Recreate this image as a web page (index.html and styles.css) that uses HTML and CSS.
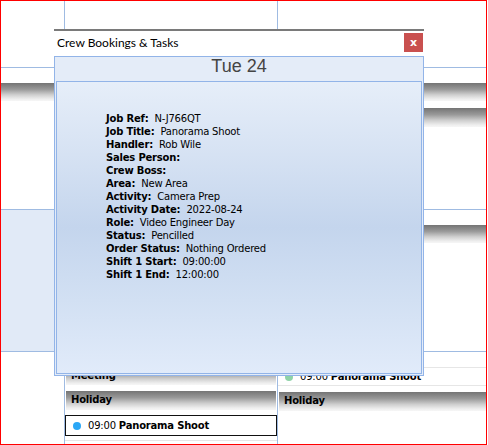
FILE: index.html
```html
<!DOCTYPE html>
<html lang="en">
<head>
    <meta charset="UTF-8">
    <title>Crew Bookings & Tasks</title>
    <link rel="stylesheet" href="styles.css">
</head>
<body>
    <div class="frame">
        <div class="calendar">
            <div class="cell c0 r1"></div>
            <div class="cell c1 r1"></div>
            <div class="cell c2 r1"></div>

            <div class="cell c0 r2"><div class="bar"></div></div>
            <div class="cell c1 r2"><div class="bar"></div></div>
            <div class="cell c2 r2"><div class="bar"></div><div class="bar second"></div></div>

            <div class="cell c0 r3 shaded"></div>
            <div class="cell c1 r3"><div class="bar"></div></div>
            <div class="cell c2 r3"><div class="bar"></div></div>

            <div class="cell c0 r4"></div>
            <div class="cell c1 r4">
                <div class="spacer"></div>
                <div class="bar label">Meeting</div>
                <div class="bar label holiday">Holiday</div>
                <div class="event selected"><span class="dot blue"></span>09:00 <b>Panorama Shoot</b></div>
                <div class="rule"></div>
            </div>
            <div class="cell c2 r4">
                <div class="spacer line"></div>
                <div class="event plain"><span class="dot green"></span>09:00 <b>Panorama Shoot</b></div>
                <div class="bar label holiday">Holiday</div>
            </div>
        </div>

        <div class="dialog">
            <div class="dialog-title">
                <span>Crew Bookings &amp; Tasks</span>
                <button class="close">x</button>
            </div>
            <div class="dialog-body">
                <div class="day">Tue 24</div>
                <div class="details">
                    <div><b>Job Ref:</b> N-J766QT</div>
                    <div><b>Job Title:</b> Panorama Shoot</div>
                    <div><b>Handler:</b> Rob Wile</div>
                    <div><b>Sales Person:</b></div>
                    <div><b>Crew Boss:</b></div>
                    <div><b>Area:</b> New Area</div>
                    <div><b>Activity:</b> Camera Prep</div>
                    <div><b>Activity Date:</b> 2022-08-24</div>
                    <div><b>Role:</b> Video Engineer Day</div>
                    <div><b>Status:</b> Pencilled</div>
                    <div><b>Order Status:</b> Nothing Ordered</div>
                    <div><b>Shift 1 Start:</b> 09:00:00</div>
                    <div><b>Shift 1 End:</b> 12:00:00</div>
                </div>
            </div>
        </div>
    </div>
</body>
</html>
```

FILE: styles.css
```css
body { margin: 0; font-family: "DejaVu Sans", Tahoma, sans-serif; font-size: 10px; letter-spacing: -0.2px; color: #000; }
.frame { position: relative; width: 487px; height: 445px; border: 1px solid #f00; box-sizing: border-box; overflow: hidden; background: #fff; }

.calendar { display: grid; grid-template-columns: 63px 213px 209px; grid-template-rows: 67px 142px 142px 92px; }
.cell { box-sizing: border-box; border-bottom: 1px solid #9fbbe2; }
.c1, .c2 { border-left: 1px solid #9fbbe2; }
.r4 { border-bottom: none; }
.shaded { background: #e1eaf7; }

.bar { height: 18px; margin-top: 15px; background: linear-gradient(to bottom, #747474 0%, #999 35%, #cecece 65%, #efefef 90%, #f6f6f6 100%); }
.c1 .bar { margin-left: 1px; margin-right: 1px; }
.c2 .bar { margin-left: 1px; }
.bar.second { margin-top: 7px; height: 19px; }
.bar.label { font-weight: bold; line-height: 18px; padding-left: 5px; margin-top: 0; }
.bar.holiday { height: 19px; line-height: 18px; margin-top: 6px; }

.spacer { height: 15px; }
.spacer.line { border-bottom: 1px solid #e6e6e6; }
.event { display: flex; align-items: center; height: 20px; box-sizing: border-box; padding-left: 7px; white-space: pre; }
.event.selected { border: 1px solid #111; margin-top: 5px; height: 21px; }
.event.plain { height: 18px; border-bottom: 1px solid #e6e6e6; padding-left: 7px; }
.dot { width: 8px; height: 8px; border-radius: 50%; margin-right: 7px; }
.dot.blue { background: #2aa7f6; }
.dot.green { background: #8fd3a8; }
.rule { margin-top: 4px; border-top: 1px solid #e6e6e6; }

.dialog { position: absolute; left: 53px; top: 28px; width: 370px; }
.dialog-title { display: flex; align-items: flex-start; justify-content: space-between; height: 27px; box-sizing: border-box; background: #fff; border-top: 2px solid #7a7a7a; padding: 0 1px 0 3px; }
.dialog-title span { font-family: Lato, sans-serif; font-size: 12px; letter-spacing: 0; line-height: 24px; }
.close { margin-top: 2px; width: 19px; height: 19px; padding: 0; border: none; background: #c9504f; color: #fff; font-family: "DejaVu Sans", sans-serif; font-size: 11px; font-weight: bold; line-height: 17px; }

.dialog-body { background: #e4ecf8; border: 1px solid #92b4e8; padding: 0 1px 1px 1px; }
.day { height: 24px; line-height: 19px; text-align: center; font-family: "Liberation Sans", Arial, sans-serif; font-size: 18px; letter-spacing: 0; color: #444; }
.details { height: 293px; box-sizing: border-box; border: 1px solid #92b4e8; padding: 30px 0 0 49px; line-height: 13px;
    background: linear-gradient(to bottom, #e6eef9 0%, #d6e2f3 25%, #c4d5ed 50%, #d2e0f3 75%, #e1ebfa 100%); }
.details b { margin-right: 3px; }
```
